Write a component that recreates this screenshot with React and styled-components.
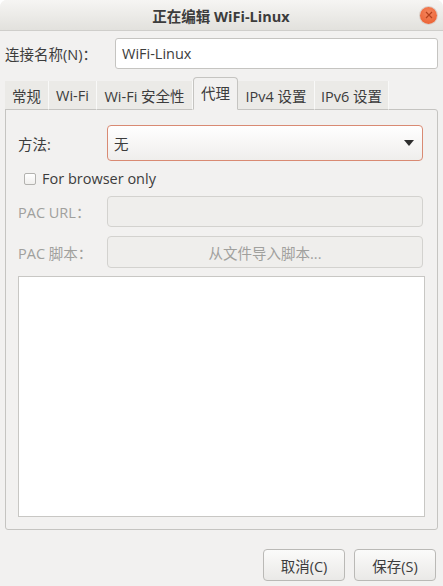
import React from "react";
import styled, { createGlobalStyle } from "styled-components";

const Global = createGlobalStyle`
  html, body { margin: 0; padding: 0; background: #ffffff; }
  * { box-sizing: border-box; }
  body { font-family: "Open Sans", "Noto Sans CJK SC", sans-serif; font-size: 14.5px; color: #3c3c3c; }
`;

const Window = styled.div`
  width: 443px;
  height: 586px;
  background: #f2f1f0;
  border-radius: 7px 7px 0 0;
  overflow: hidden;
  display: flex;
  flex-direction: column;
`;

const TitleBar = styled.div`
  height: 31px;
  flex: none;
  display: grid;
  grid-template-columns: 1fr auto 1fr;
  align-items: center;
  background: linear-gradient(#f6f5f3, #e2e1dd);
  border-bottom: 1px solid #cfcecb;
  padding: 0 6px 0 5px;
`;

const Title = styled.div`
  grid-column: 2;
  font-weight: 700;
  font-size: 14.5px;
  color: #3c3c3c;
`;

const Close = styled.div`
  justify-self: end;
  width: 17px;
  height: 17px;
  border-radius: 50%;
  background: radial-gradient(circle at 50% 35%, #f4875f, #e9592a);
  box-shadow: 0 0 0 1px #d9cfc9;
  display: flex;
  align-items: center;
  justify-content: center;
`;

const Body = styled.div`
  flex: 1;
  display: flex;
  flex-direction: column;
  padding: 7px 5px 5px 5px;
`;

const NameRow = styled.div`
  display: flex;
  align-items: center;
  height: 31px;
  padding-left: 0px;
`;

const NameLabel = styled.div`
  width: 110px;
`;

const TextInput = styled.div`
  flex: 1;
  height: 31px;
  background: #ffffff;
  border: 1px solid #c5c4c1;
  border-radius: 3px;
  display: flex;
  align-items: center;
  padding-left: 6px;
  color: #3c3c3c;
`;

const Tabs = styled.div`
  display: flex;
  align-items: flex-end;
  height: 33px;
  margin-top: 8px;
  margin-bottom: -1px;
  position: relative;
  z-index: 1;
`;

const Tab = styled.div`
  width: ${(p) => p.$w}px;
  height: ${(p) => (p.$active ? 33 : 29)}px;
  display: flex;
  align-items: center;
  justify-content: center;
  color: #3c3c3c;
  background: ${(p) => (p.$active ? "#f2f1f0" : "#ebeae7")};
  border: ${(p) => (p.$active ? "1px solid #c5c4c1" : "none")};
  border-bottom: ${(p) => (p.$active ? "1px solid #f2f1f0" : "1px solid #c5c4c1")};
  border-right: ${(p) => (p.$active ? "1px solid #c5c4c1" : "1px solid #f9f9f8")};
  border-radius: ${(p) => (p.$active ? "4px 4px 0 0" : "0")};
  padding-bottom: ${(p) => (p.$active ? 3 : 0)}px;
`;

const Panel = styled.div`
  height: 421px;
  border: 1px solid #c5c4c1;
  border-radius: 0 3px 3px 3px;
  background: #f2f1f0;
  padding: 15px 13px 12px 12px;
  display: flex;
  flex-direction: column;
`;

const FormGrid = styled.div`
  display: grid;
  grid-template-columns: 89px 1fr;
  margin-right: 1px;
`;

const FieldLabel = styled.div`
  color: ${(p) => (p.$disabled ? "#a0a09d" : "#3c3c3c")};
  display: flex;
  align-items: center;
  height: ${(p) => p.$h}px;
  margin-bottom: ${(p) => p.$mb || 0}px;
`;

const Combo = styled.div`
  height: 36px;
  border: 1px solid #d98a73;
  border-radius: 4px;
  background: linear-gradient(#ffffff, #efeeec);
  display: flex;
  align-items: center;
  justify-content: space-between;
  padding: 0 8px 0 6px;
`;

const CheckRow = styled.label`
  grid-column: 1 / 3;
  display: flex;
  align-items: center;
  gap: 6px;
  height: 35px;
  padding-left: 6px;
  color: #3c3c3c;
`;

const Check = styled.span`
  width: 12px;
  height: 12px;
  border: 1px solid #b3b2af;
  border-radius: 2px;
  background: linear-gradient(#ffffff, #f0efed);
`;

const DisabledInput = styled.div`
  height: ${(p) => p.$h}px;
  margin-bottom: ${(p) => p.$mb || 0}px;
  border: 1px solid #d3d2cf;
  border-radius: 4px;
  background: #efeeec;
  display: flex;
  align-items: center;
  justify-content: center;
  color: #a0a09d;
`;

const TextArea = styled.div`
  flex: 1;
  margin-top: 8px;
  margin-right: -1px;
  background: #ffffff;
  border: 1px solid #c8c7c4;
`;

const Footer = styled.div`
  flex: 1;
  display: flex;
  justify-content: flex-end;
  align-items: flex-end;
  gap: 9px;
  padding-right: 2px;
`;

const Button = styled.div`
  width: 82px;
  height: 32px;
  border: 1px solid #bab9b6;
  border-radius: 4px;
  background: linear-gradient(#fbfbfa, #eae9e7);
  display: flex;
  align-items: center;
  justify-content: center;
  color: #3c3c3c;
`;

const tabs = [
  { t: "常规", w: 44 },
  { t: "Wi-Fi", w: 48 },
  { t: "Wi-Fi 安全性", w: 96 },
  { t: "代理", w: 45, active: true },
  { t: "IPv4 设置", w: 77 },
  { t: "IPv6 设置", w: 74 },
];

export default function App() {
  return (
    <>
      <Global />
      <Window>
        <TitleBar>
          <Title>正在编辑 WiFi-Linux</Title>
          <Close>
            <svg width="8" height="8" viewBox="0 0 8 8">
              <path d="M1 1L7 7M7 1L1 7" stroke="#b3401c" strokeWidth="1.2" />
            </svg>
          </Close>
        </TitleBar>
        <Body>
          <NameRow>
            <NameLabel>连接名称(N)：</NameLabel>
            <TextInput>WiFi-Linux</TextInput>
          </NameRow>
          <Tabs>
            {tabs.map((x) => (
              <Tab key={x.t} $w={x.w} $active={x.active}>
                {x.t}
              </Tab>
            ))}
          </Tabs>
          <Panel>
            <FormGrid>
              <FieldLabel $h={36}>方法:</FieldLabel>
              <Combo>
                <span>无</span>
                <svg width="10" height="6" viewBox="0 0 10 6">
                  <path d="M0 0H10L5 6Z" fill="#2e2e2e" />
                </svg>
              </Combo>
              <CheckRow>
                <Check />
                For browser only
              </CheckRow>
              <FieldLabel $h={31} $mb={9} $disabled>
                PAC URL：
              </FieldLabel>
              <DisabledInput $h={31} $mb={9} />
              <FieldLabel $h={32} $disabled>
                PAC 脚本：
              </FieldLabel>
              <DisabledInput $h={32}>从文件导入脚本...</DisabledInput>
            </FormGrid>
            <TextArea />
          </Panel>
          <Footer>
            <Button>取消(C)</Button>
            <Button>保存(S)</Button>
          </Footer>
        </Body>
      </Window>
    </>
  );
}
